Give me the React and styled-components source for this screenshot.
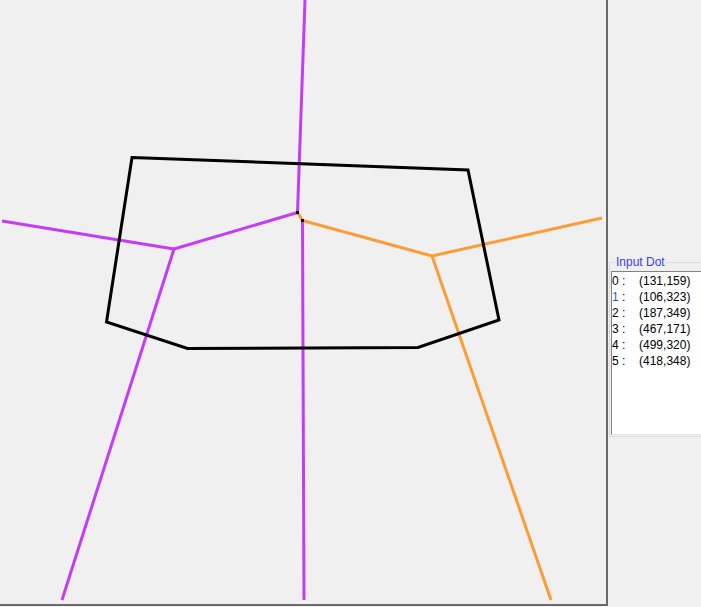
import React from "react";
import styled, { createGlobalStyle } from "styled-components";

const Global = createGlobalStyle`
  html, body { margin: 0; padding: 0; background: #f0f0f0; overflow: hidden; }
  #root { width: 701px; height: 607px; }
`;

const Window = styled.div`
  display: flex;
  width: 701px;
  height: 607px;
  background: #f0f0f0;
  font-family: "Liberation Sans", Arial, sans-serif;
  overflow: hidden;
`;

const Canvas = styled.div`
  flex: 0 0 auto;
  width: 606px;
  height: 604px;
  border-right: 2px solid #6a6a6a;
  border-bottom: 2px solid #6a6a6a;
  background: #f0f0f0;
`;

const Side = styled.div`
  flex: 1;
  padding-top: 255px;
  padding-left: 1px;
  min-width: 0;
`;

const GroupBox = styled.fieldset`
  margin: 0;
  padding: 0 0 1px 1px;
  border: 1px solid #dcdcdc;
  border-right: none;
  width: 120px;
`;

const Legend = styled.legend`
  margin-left: 4px;
  padding: 0 1px;
  font-size: 12px;
  color: #3c3cf0;
  line-height: 14px;
`;

const ListBox = styled.div`
  margin-top: 2px;
  height: 161px;
  background: #ffffff;
  border-top: 1px solid #828282;
  border-left: 1px solid #828282;
  border-bottom: 1px solid #e3e3e3;
  padding-top: 1px;
`;

const Row = styled.div`
  display: flex;
  font-size: 12px;
  line-height: 16px;
  color: #000;
  white-space: pre;
`;

const Index = styled.span`
  width: 10px;
  color: ${(p) => (p.$hi ? "#1f5fc0" : "#000")};
`;

const Colon = styled.span`
  width: 17px;
`;

const dots = [
  [131, 159],
  [106, 323],
  [187, 349],
  [467, 171],
  [499, 320],
  [418, 348],
];

const PURPLE = "#c43cf6";
const ORANGE = "#fb9c36";

export default function App() {
  return (
    <>
      <Global />
      <Window>
        <Canvas>
          <svg width="606" height="604" viewBox="0 0 606 604">
            <g strokeWidth="3" fill="none" strokeLinecap="butt">
              <line x1="305" y1="0" x2="297.5" y2="212.5" stroke={PURPLE} />
              <line x1="297.5" y1="212.5" x2="174" y2="249" stroke={PURPLE} />
              <line x1="174" y1="249" x2="2" y2="221" stroke={PURPLE} />
              <line x1="174" y1="249" x2="62" y2="600" stroke={PURPLE} />
              <line x1="302.5" y1="220.5" x2="304" y2="600" stroke={PURPLE} />
              <line x1="297.5" y1="212.5" x2="302.5" y2="220.5" stroke={ORANGE} />
              <line x1="302.5" y1="220.5" x2="432" y2="256" stroke={ORANGE} />
              <line x1="432" y1="256" x2="602" y2="218" stroke={ORANGE} />
              <line x1="432" y1="256" x2="551" y2="600" stroke={ORANGE} />
            </g>
            <polygon
              points="132,157.5 468,170 499,320 418,347.5 187.5,348.5 106.5,322"
              fill="none"
              stroke="#000"
              strokeWidth="3"
              strokeLinejoin="miter"
            />
            <rect x="296" y="211" width="3" height="3" fill="#000" />
            <rect x="301" y="219" width="3" height="3" fill="#000" />
          </svg>
        </Canvas>
        <Side>
          <GroupBox>
            <Legend>Input Dot</Legend>
            <ListBox>
              {dots.map(([x, y], i) => (
                <Row key={i}>
                  <Index $hi={i === 1}>{i}</Index>
                  <Colon>:</Colon>
                  <span>({x},{y})</span>
                </Row>
              ))}
            </ListBox>
          </GroupBox>
        </Side>
      </Window>
    </>
  );
}
